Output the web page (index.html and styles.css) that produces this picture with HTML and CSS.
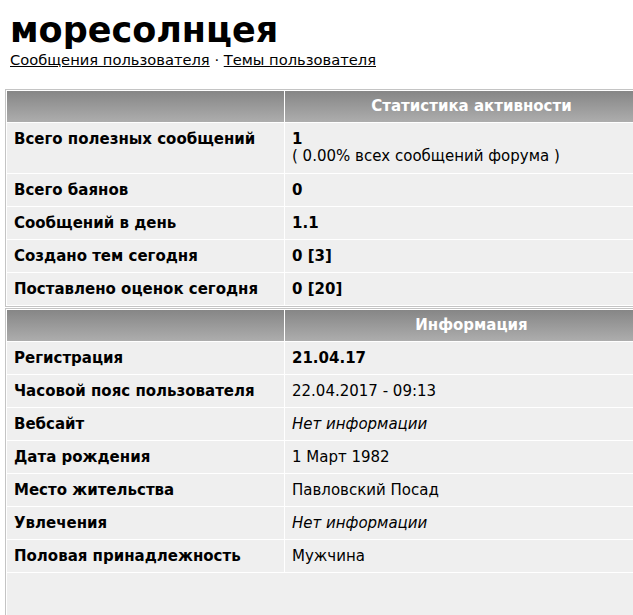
FILE: index.html
```html
<!DOCTYPE html>
<html lang="ru">
<head>
<meta charset="utf-8">
<title>моресолнцея</title>
<link rel="stylesheet" href="styles.css">
</head>
<body>
<div class="page">
  <h1 class="nick">моресолнцея</h1>
  <div class="links"><a href="#">Сообщения пользователя</a> · <a href="#">Темы пользователя</a></div>

  <div class="panel">
    <div class="head"></div>
    <div class="head title">Статистика активности</div>

    <div class="cell label tall">Всего полезных сообщений</div>
    <div class="cell tall"><b>1</b><br><span class="sub">( 0.00% всех сообщений форума )</span></div>

    <div class="cell label">Всего баянов</div>
    <div class="cell"><b>0</b></div>

    <div class="cell label">Сообщений в день</div>
    <div class="cell"><b>1.1</b></div>

    <div class="cell label">Создано тем сегодня</div>
    <div class="cell"><b>0 [3]</b></div>

    <div class="cell label">Поставлено оценок сегодня</div>
    <div class="cell"><b>0 [20]</b></div>
  </div>

  <div class="panel second">
    <div class="head"></div>
    <div class="head title">Информация</div>

    <div class="cell label">Регистрация</div>
    <div class="cell"><b>21.04.17</b></div>

    <div class="cell label">Часовой пояс пользователя</div>
    <div class="cell">22.04.2017 - 09:13</div>

    <div class="cell label">Вебсайт</div>
    <div class="cell"><i>Нет информации</i></div>

    <div class="cell label">Дата рождения</div>
    <div class="cell">1 Март 1982</div>

    <div class="cell label">Место жительства</div>
    <div class="cell">Павловский Посад</div>

    <div class="cell label">Увлечения</div>
    <div class="cell"><i>Нет информации</i></div>

    <div class="cell label">Половая принадлежность</div>
    <div class="cell">Мужчина</div>

    <div class="filler"></div>
  </div>
</div>
</body>
</html>
```

FILE: styles.css
```css
html {
  overflow: hidden;
}
body {
  margin: 0;
  background: #fff;
  font-family: "DejaVu Sans", Verdana, sans-serif;
  font-size: 15px;
  color: #000;
}
.page {
  padding: 12px 0 0 5px;
}
.nick {
  margin: 0 0 0 5px;
  font-size: 35px;
  line-height: 37px;
  font-weight: bold;
}
.links {
  margin: 2px 0 0 5px;
  font-size: 14.7px;
  line-height: 17px;
}
.links a {
  color: #000;
  text-decoration: underline;
}
.panel {
  margin-top: 21px;
  width: 640px;
  display: grid;
  grid-template-columns: 277px 1fr;
  gap: 1px;
  padding: 1px;
  border: 1px solid #c4c4c4;
  background: #fff;
}
.panel.second {
  margin-top: 1px;
}
.head {
  height: 31px;
  background: linear-gradient(#868686, #adadad);
}
.head.title {
  color: #fff;
  font-weight: bold;
  text-align: center;
  line-height: 31px;
  padding-left: 11px;
}
.cell {
  background: #efefef;
  padding: 8px 8px 0 7px;
  height: 24px;
  line-height: 17px;
}
.cell.tall {
  height: 42px;
}
.label {
  font-weight: bold;
}
.sub {
  font-weight: normal;
}
.filler {
  grid-column: 1 / -1;
  height: 60px;
  background: #efefef;
}
```
